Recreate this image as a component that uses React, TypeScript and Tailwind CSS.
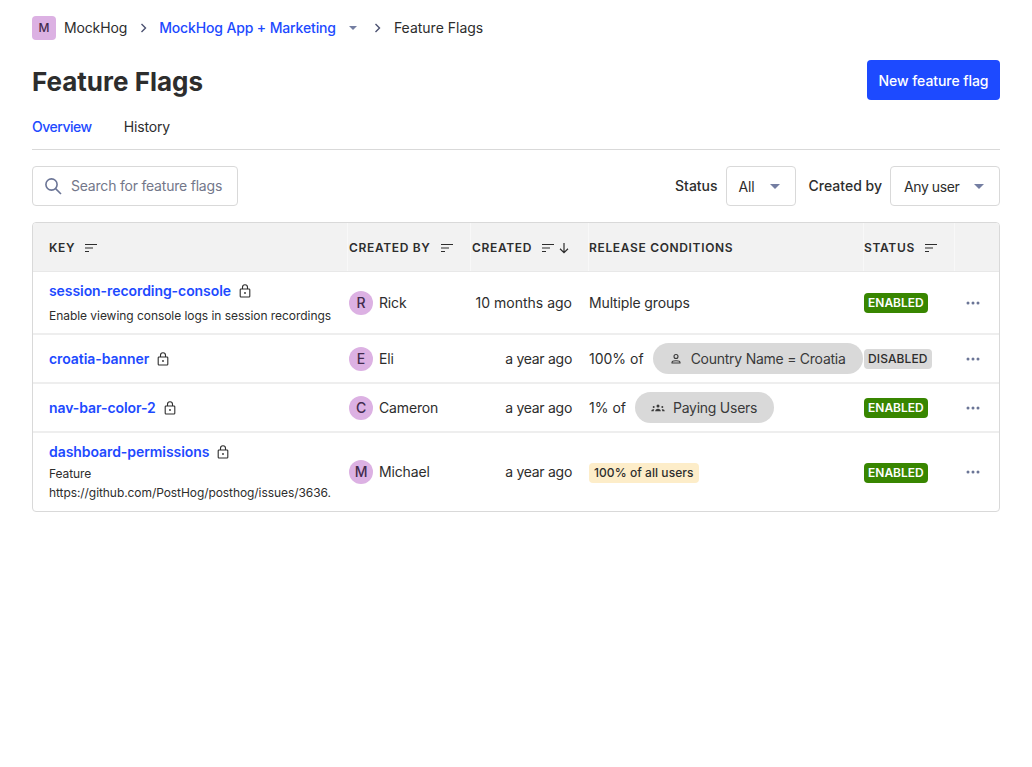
import type { ReactNode } from 'react'

type Flag = {
  name: string
  description?: ReactNode
  user: string
  created: string
  status: 'ENABLED' | 'DISABLED'
  rowClass: string
  condition: ReactNode
}

function SortIcon() {
  return (
    <svg width="14" height="10" viewBox="0 0 14 10" className="shrink-0" fill="none" stroke="#2d2d2d" strokeWidth="1.2">
      <path d="M1 1.5h12M1 5h8M1 8.5h4" />
    </svg>
  )
}

function LockIcon() {
  return (
    <svg width="12" height="14" viewBox="0 0 12 14" className="shrink-0" fill="none" stroke="#2d2d2d" strokeWidth="1.1">
      <rect x="1.2" y="5" width="9.6" height="8" rx="0.8" />
      <path d="M3.5 5V3.2a2.5 2.5 0 0 1 5 0V5" />
      <circle cx="6" cy="9" r="0.9" fill="#2d2d2d" stroke="none" />
    </svg>
  )
}

function Caret({ className }: { className: string }) {
  return (
    <svg viewBox="0 0 10 5" className={className}>
      <path d="M0 0h10L5 5z" fill="#747ea2" />
    </svg>
  )
}

function Chevron() {
  return (
    <svg width="7" height="10" viewBox="0 0 7 10" fill="none" stroke="#4b5170" strokeWidth="1.4">
      <path d="M1.5 1l4 4-4 4" />
    </svg>
  )
}

function PersonIcon() {
  return (
    <svg width="14" height="14" viewBox="0 0 14 14" fill="none" stroke="#3a3a3a" strokeWidth="1.1">
      <circle cx="7" cy="4.5" r="2" />
      <path d="M3 11v-.6c0-1 1-1.7 4-1.7s4 .7 4 1.7v.6z" />
    </svg>
  )
}

function GroupIcon() {
  return (
    <svg width="14" height="14" viewBox="0 0 14 14" fill="#3a3a3a">
      <circle cx="7" cy="5" r="1.5" />
      <circle cx="2.7" cy="6" r="1" />
      <circle cx="11.3" cy="6" r="1" />
      <path d="M4.2 10.2c0-1.5 1.2-2.4 2.8-2.4s2.8.9 2.8 2.4zM.3 10.2c0-1.2.8-2 2-2 .4 0 .7.1 1 .2-.4.5-.6 1.1-.6 1.8zM13.7 10.2c0-1.2-.8-2-2-2-.4 0-.7.1-1 .2.4.5.6 1.1.6 1.8z" />
    </svg>
  )
}

function Pill({ icon, label }: { icon: ReactNode; label: string }) {
  return (
    <span className="inline-flex h-[31px] items-center gap-2 rounded-full bg-[#d9d9d9] pr-[17px] pl-4 tracking-[-0.018em] whitespace-nowrap text-[#3a3a3a]">
      {icon}
      {label}
    </span>
  )
}

const flags: Flag[] = [
  {
    name: 'session-recording-console',
    description: <div className="mt-[10px] text-xs leading-[14px] tracking-[-0.004em]">Enable viewing console logs in session recordings</div>,
    user: 'Rick',
    created: '10 months ago',
    status: 'ENABLED',
    rowClass: 'h-[63px]',
    condition: 'Multiple groups',
  },
  {
    name: 'croatia-banner',
    user: 'Eli',
    created: 'a year ago',
    status: 'DISABLED',
    rowClass: 'h-[49px]',
    condition: (
      <div className="flex items-center gap-[9px] tracking-normal whitespace-nowrap">
        100% of
        <Pill icon={<PersonIcon />} label="Country Name = Croatia" />
      </div>
    ),
  },
  {
    name: 'nav-bar-color-2',
    user: 'Cameron',
    created: 'a year ago',
    status: 'ENABLED',
    rowClass: 'h-[49px]',
    condition: (
      <div className="flex items-center gap-[9px] tracking-normal whitespace-nowrap">
        1% of
        <Pill icon={<GroupIcon />} label="Paying Users" />
      </div>
    ),
  },
  {
    name: 'dashboard-permissions',
    description: (
      <div className="mt-1 text-xs leading-[19px] tracking-[-0.006em]">
        Feature
        <br />
        https://github.com/PostHog/posthog/issues/3636.
      </div>
    ),
    user: 'Michael',
    created: 'a year ago',
    status: 'ENABLED',
    rowClass: 'h-[78px]',
    condition: (
      <span className="inline-block rounded-[4px] bg-[#fdedc9] px-[5px] py-[2px] text-xs leading-4 font-medium tracking-[0.005em]">100% of all users</span>
    ),
  },
]

function HeaderCell({ children, className }: { children: ReactNode; className: string }) {
  return (
    <div className={`flex h-full items-center gap-[9px] border-l border-[#f8f8f8] pt-px text-xs font-semibold tracking-[0.055em] ${className}`}>
      {children}
    </div>
  )
}

export default function App() {
  return (
    <div className="min-h-[767px] bg-white px-8 pt-4 text-sm tracking-[-0.01em] text-[#2d2d2d] [font-family:Inter,sans-serif]">
      <div className="flex h-6 items-center">
        <span className="flex h-6 w-6 items-center justify-center rounded-[4px] bg-[#dcb1e3] text-xs font-medium text-[#432b4d]">M</span>
        <span className="ml-2">MockHog</span>
        <span className="ml-[13px]"><Chevron /></span>
        <span className="ml-3 font-medium text-[#1d4aff]">MockHog App + Marketing</span>
        <Caret className="ml-[13px] h-1 w-2" />
        <span className="ml-[17px]"><Chevron /></span>
        <span className="ml-[13px] tracking-normal">Feature Flags</span>
      </div>

      <div className="mt-5 flex h-10 items-center justify-between">
        <h1 className="pt-1 text-[26px] font-bold tracking-normal">Feature Flags</h1>
        <button className="h-10 w-[133px] rounded-[4px] bg-[#1d4aff] pt-px text-sm font-medium tracking-[-0.005em] text-white">New feature flag</button>
      </div>

      <div className="mt-[11px] flex h-[39px] items-center gap-8 border-b border-[#d9d9d9] pb-[6px]">
        <span className="font-medium tracking-[-0.035em] text-[#1d4aff]">Overview</span>
        <span>History</span>
      </div>

      <div className="mt-4 flex items-center justify-between">
        <div className="flex h-10 w-[206px] items-center gap-[9px] rounded-[4px] border border-[#d9d9d9] px-[11px]">
          <svg width="18" height="18" viewBox="0 0 18 18" className="shrink-0" fill="none" stroke="#6b7596" strokeWidth="1.6">
            <circle cx="7.5" cy="7.5" r="5.6" />
            <path d="M11.6 11.6l5.4 5.4" />
          </svg>
          <span className="tracking-[-0.015em] whitespace-nowrap text-[#73778a]">Search for feature flags</span>
        </div>
        <div className="flex items-center">
          <span className="font-medium tracking-normal">Status</span>
          <div className="ml-2 flex h-10 w-[70px] items-center justify-between rounded-[4px] border border-[#d9d9d9] pr-[15px] pl-3">
            <span className="pt-px">All</span>
            <Caret className="h-[5px] w-[10px]" />
          </div>
          <span className="ml-[13px] font-medium tracking-normal">Created by</span>
          <div className="ml-2 flex h-10 w-[110px] items-center justify-between rounded-[4px] border border-[#d9d9d9] pr-[15px] pl-[13px]">
            <span className="pt-px tracking-[-0.03em]">Any user</span>
            <Caret className="h-[5px] w-[10px]" />
          </div>
        </div>
      </div>

      <div className="mt-4 overflow-hidden rounded-[4px] border border-[#d9d9d9]">
        <div className="flex h-[49px] items-center border-b border-[#e8e8e8] bg-[#f2f2f2]">
          <div className="flex w-[314px] items-center gap-[9px] pt-px pl-4 text-xs font-semibold tracking-[0.055em]">KEY <SortIcon /></div>
          <HeaderCell className="w-[123px] pl-[1px]">CREATED BY <SortIcon /></HeaderCell>
          <HeaderCell className="w-[118px] pl-px">
            CREATED
            <span className="flex items-center gap-[3px]">
              <SortIcon />
              <svg width="12" height="12" viewBox="0 0 12 12" fill="none" stroke="#2d2d2d" strokeWidth="1.2">
                <path d="M6 1v9.5M2 6.8l4 3.8 4-3.8" />
              </svg>
            </span>
          </HeaderCell>
          <HeaderCell className="w-[275px]">RELEASE CONDITIONS</HeaderCell>
          <HeaderCell className="w-[91px]">STATUS <SortIcon /></HeaderCell>
          <div className="h-full flex-1 border-l border-[#f8f8f8]" />
        </div>

        {flags.map((flag, i) => (
          <div key={flag.name} className={`flex items-center ${flag.rowClass} ${i < flags.length - 1 ? 'border-b-2 border-[#eeeeee]' : ''}`}>
            <div className={`w-[315px] pl-4 ${i === 3 ? 'pt-[2px]' : i === 0 ? 'pt-px' : ''}`}>
              <div className="flex items-center gap-2 leading-4">
                <span className="font-semibold tracking-[-0.005em] text-[#1d4aff]">{flag.name}</span>
                <LockIcon />
              </div>
              {flag.description}
            </div>
            <div className="flex w-[123px] items-center gap-[6px] pl-px">
              <span className="flex h-6 w-6 items-center justify-center rounded-full bg-[#dcb1e3] text-sm font-medium text-[#432b4d]">{flag.user[0]}</span>
              {flag.user}
            </div>
            <div className={`w-[101px] text-right ${i === 0 ? 'tracking-normal' : 'tracking-[-0.02em]'}`}>{flag.created}</div>
            <div className="ml-[17px] w-[275px]">{flag.condition}</div>
            <div className="w-[91px]">
              {flag.status === 'ENABLED' ? (
                <span className="inline-block rounded-[4px] bg-[#388600] px-1 py-[2px] text-xs leading-4 font-semibold tracking-normal text-white">ENABLED</span>
              ) : (
                <span className="inline-block rounded-[4px] bg-[#d9d9d9] px-1 py-[2px] text-xs leading-4 font-medium tracking-[0.01em]">DISABLED</span>
              )}
            </div>
            <svg width="14" height="4" viewBox="0 0 14 4" className="ml-[11px]" fill="#6b7596">
              <circle cx="2" cy="2" r="1.5" />
              <circle cx="7" cy="2" r="1.5" />
              <circle cx="12" cy="2" r="1.5" />
            </svg>
          </div>
        ))}
      </div>
    </div>
  )
}
